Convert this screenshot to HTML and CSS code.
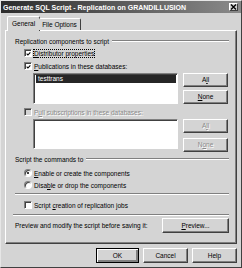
FILE: index.html
```html
<!DOCTYPE html>
<html>
  <head>
    <title>Generate SQL Script</title>
    <link rel="stylesheet" href="styles.css">
  </head>
  <body>
    <div class="window">
      <div class="titlebar">
        <span class="title">Generate SQL Script - Replication on GRANDILLUSION</span>
        <span class="close">
          <svg width="7" height="6" viewBox="0 0 7 6"><path d="M1 0.5 L6 5.5 M6 0.5 L1 5.5" stroke="#000" stroke-width="1.4"/></svg>
        </span>
      </div>

      <div class="tabs">
        <div class="tab active">General</div>
        <div class="tab">File Options</div>
      </div>

      <div class="panel">
        <div class="group-head">
          <span>Replication components to script</span>
          <i class="etch"></i>
        </div>
        <div class="check-row row-1">
          <span class="box"><svg width="6" height="6" viewBox="0 0 6 6"><path d="M0.8 2.6 L2.3 4.2 L5.2 1" fill="none" stroke="#000" stroke-width="1.3"/></svg></span>
          <span class="focus"><u>D</u>istributor properties</span>
        </div>
        <div class="check-row row-2">
          <span class="box"><svg width="6" height="6" viewBox="0 0 6 6"><path d="M0.8 2.6 L2.3 4.2 L5.2 1" fill="none" stroke="#000" stroke-width="1.3"/></svg></span>
          <span><u>P</u>ublications in these databases:</span>
        </div>
        <div class="list-block">
          <div class="listbox">
            <div class="list-item selected">testtrans</div>
          </div>
          <div class="list-buttons">
            <div class="btn">A<u>l</u>l</div>
            <div class="btn"><u>N</u>one</div>
          </div>
        </div>

        <div class="check-row row-3 disabled">
          <span class="box off"></span>
          <span>P<u>u</u>ll subscriptions in these databases:</span>
        </div>
        <div class="list-block second">
          <div class="listbox"></div>
          <div class="list-buttons">
            <div class="btn disabled">A<u>l</u>l</div>
            <div class="btn disabled">N<u>o</u>ne</div>
          </div>
        </div>

        <div class="group-head second">
          <span>Script the commands to</span>
          <i class="etch"></i>
        </div>
        <div class="check-row radio-1">
          <span class="radio on"></span>
          <span><u>E</u>nable or create the components</span>
        </div>
        <div class="check-row radio-2">
          <span class="radio"></span>
          <span>Disa<u>b</u>le or drop the components</span>
        </div>
        <i class="etch sep-1"></i>
        <div class="check-row row-4">
          <span class="box"></span>
          <span>Script <u>c</u>reation of replication jobs</span>
        </div>
        <i class="etch sep-2"></i>
        <div class="preview-row">
          <span>Preview and modify the script before saving it:</span>
          <div class="btn preview"><u>P</u>review...</div>
        </div>
      </div>

      <div class="actions">
        <div class="btn default">OK</div>
        <div class="btn">Cancel</div>
        <div class="btn">Help</div>
      </div>
    </div>
  </body>
</html>
```

FILE: styles.css
```css
body {
  margin: 0;
  background-color: #d4d4d4;
  font-family: "Liberation Sans", Arial, sans-serif;
  font-size: 6.5px;
  color: #000;
}
.window {
  box-sizing: border-box;
  width: 242px;
  height: 268px;
  border: 1px solid;
  border-color: #e6e6e6 #404040 #404040 #e6e6e6;
  background-color: #d4d4d4;
}

/* title bar */
.titlebar {
  display: flex;
  align-items: center;
  justify-content: space-between;
  height: 12px;
  padding: 0 3px 0 2px;
  background: linear-gradient(to right, #2c2c2c, #8a8a8a);
}
.title {
  color: #fff;
  font-weight: 700;
  font-size: 7px;
}
.close {
  display: flex;
  align-items: center;
  justify-content: center;
  box-sizing: border-box;
  width: 9px;
  height: 8px;
  background-color: #d4d4d4;
  border: 1px solid;
  border-color: #fff #404040 #404040 #fff;
}

/* tabs */
.tabs {
  display: flex;
  align-items: flex-end;
  height: 14px;
  margin: 3px 0 0 6px;
  position: relative;
  z-index: 1;
}
.tab {
  box-sizing: border-box;
  height: 12px;
  padding: 0 3px;
  line-height: 11px;
  border: 1px solid;
  border-bottom: none;
  border-color: #fff #404040 #fff #fff;
  border-radius: 2px 2px 0 0;
  background-color: #d4d4d4;
}
.tab.active {
  height: 15px;
  margin-bottom: -1px;
  padding: 0 4px;
  line-height: 13px;
  margin-right: -1px;
}
.tab.active + .tab {
  border-left: none;
}

/* panel */
.panel {
  box-sizing: border-box;
  width: 232px;
  height: 214px;
  margin-left: 4px;
  padding: 5px 7px 0 9px;
  border: 1px solid;
  border-color: #fff #404040 #404040 #fff;
  box-shadow: inset -1px -1px #808080;
  display: flex;
  flex-direction: column;
}
.group-head {
  display: flex;
  align-items: center;
  height: 10px;
}
.group-head span {
  margin-right: 3px;
}
.group-head .etch {
  flex: 1;
}
.group-head.second {
  margin-top: 2px;
}
.etch {
  display: block;
  height: 0;
  border-top: 1px solid #808080;
  border-bottom: 1px solid #fff;
}
.sep-1 {
  margin: 3px 0 0 0;
}
.sep-2 {
  margin: 4px 0 0 -2px;
}

/* check boxes and radios */
.check-row {
  display: flex;
  align-items: center;
  height: 10px;
  padding-left: 9px;
}
.row-1 { margin-top: 2px; }
.row-2 { margin-top: 3px; }
.row-3 { margin-top: 3px; }
.row-4 { margin-top: 5px; }
.radio-1 { margin-top: 4px; }
.radio-2 { margin-top: 2px; }
.box {
  box-sizing: border-box;
  display: flex;
  align-items: center;
  justify-content: center;
  width: 8px;
  height: 8px;
  margin-right: 2px;
  background-color: #fff;
  border: 1px solid;
  border-color: #808080 #fff #fff #808080;
  box-shadow: inset 1px 1px #404040;
}
.box svg {
  margin: 1px 0 0 1px;
}
.box.off {
  background-color: #d4d4d4;
}
.focus {
  outline: 1px dotted #000;
  outline-offset: 0;
}
.radio {
  box-sizing: border-box;
  display: flex;
  align-items: center;
  justify-content: center;
  width: 8px;
  height: 8px;
  margin-right: 2px;
  border-radius: 50%;
  background-color: #fff;
  border: 1px solid;
  border-color: #808080 #fff #fff #808080;
  box-shadow: inset 1px 1px #404040;
}
.radio.on::after {
  content: "";
  width: 2px;
  height: 2px;
  border-radius: 50%;
  background-color: #000;
}
.disabled {
  color: #8a8a8a;
  text-shadow: 1px 1px #fff;
}

/* list boxes */
.list-block {
  display: flex;
  margin: 2px 0 0 18px;
  gap: 5px;
  height: 31px;
}
.list-block.second {
  height: 33px;
}
.listbox {
  box-sizing: border-box;
  width: 145px;
  height: 31px;
  padding: 1px;
  background-color: #fff;
  border: 1px solid;
  border-color: #808080 #fff #fff #808080;
  box-shadow: inset 1px 1px #404040;
}
.second .listbox {
  height: 30px;
}
.list-item {
  height: 8px;
  line-height: 8px;
  padding: 0 2px;
  margin-left: 1px;
}
.list-item.selected {
  background-color: #262626;
  color: #fff;
}
.list-buttons {
  display: flex;
  flex-direction: column;
  justify-content: space-between;
}

/* buttons */
.btn {
  box-sizing: border-box;
  width: 45px;
  height: 14px;
  line-height: 12px;
  text-align: center;
  background-color: #d4d4d4;
  border: 1px solid;
  border-color: #fff #404040 #404040 #fff;
  box-shadow: inset -1px -1px #808080;
}
.btn.default {
  border-color: #000;
  box-shadow: inset 1px 1px #fff, inset -2px -2px #808080;
}

.preview-row {
  display: flex;
  align-items: center;
  justify-content: space-between;
  margin-top: 2px;
}
.btn.preview {
  width: 67px;
  height: 15px;
  line-height: 13px;
}

.actions {
  display: flex;
  justify-content: flex-end;
  gap: 4px;
  margin: 4px 4px 0 0;
}
.actions .btn {
  height: 15px;
  line-height: 13px;
}
.actions .default {
  width: 43px;
}
```
